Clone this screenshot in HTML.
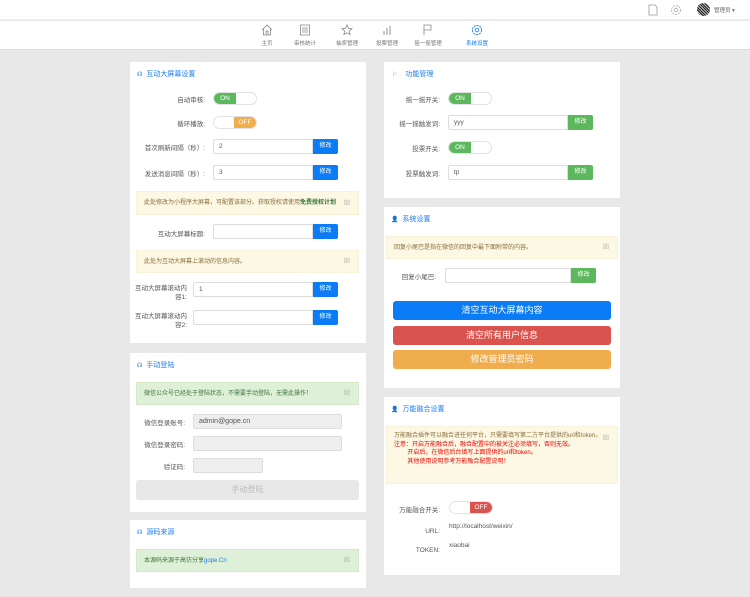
<!DOCTYPE html>
<html><head><meta charset="utf-8"><style>
*{box-sizing:border-box;margin:0;padding:0}
body{width:750px;height:597px;background:#e8e8e8;font-family:"Liberation Sans","Noto Sans CJK SC",sans-serif;font-size:7px;color:#555;position:relative;overflow:hidden}
.a{position:absolute}
.top{left:0;top:0;width:750px;height:20px;background:#fff;border-bottom:1px solid #eee}
.nav{left:0;top:21px;width:750px;height:29px;background:#fff;border-bottom:1px solid #ddd}
.ni{position:absolute;top:3px;width:40px;text-align:center;font-size:5.5px;color:#777}
.ni svg{display:block;margin:0 auto 3px}
.p{background:#fff;position:absolute}
.t{position:absolute;left:7px;top:7px;color:#1e7df0;font-size:7px}
.t i{font-style:normal;margin-right:4px;font-size:6px}
.lb{position:absolute;text-align:right;font-size:6.5px;color:#555}
.tg{position:absolute;width:44px;height:13px;border-radius:7px;border:1px solid #e2e2e2;background:#fff;overflow:hidden}
.tg span{position:absolute;top:0;height:100%;width:22px;color:#fff;font-size:6.5px;line-height:12px;text-align:center}
.in{position:absolute;height:15px;border:1px solid #ddd;border-radius:2px 0 0 2px;background:#fff;font-size:6.5px;line-height:13px;padding-left:5px;color:#555}
.bt{position:absolute;height:15px;width:25px;color:#fff;font-size:6px;line-height:15px;text-align:center;border-radius:0 2px 2px 0}
.b{background:#0a7cf6}.g{background:#5cb85c}
.al{position:absolute;background:#fcf8e3;color:#8a6d3b;font-size:6px;padding:0 7px;border:1px solid #f8f2d8}
.al.gr{background:#dff0d8;color:#3c763d;border-color:#d6e9c6}
.x{position:absolute;right:8px;color:#aaa;font-size:7px}
.bb{position:absolute;left:9px;width:218px;height:19px;border-radius:3px;color:#fff;text-align:center;font-size:9px;line-height:19px}
</style></head><body>
<div class="a top">
 <svg class="a" style="left:648px;top:4px" width="10" height="12" viewBox="0 0 10 12"><path d="M1 1h6l2 2v8H1z" fill="none" stroke="#999" stroke-width=".8"/></svg>
 <svg class="a" style="left:670px;top:4px" width="12" height="12" viewBox="0 0 12 12"><circle cx="6" cy="6" r="4.5" fill="none" stroke="#aaa" stroke-width=".8" stroke-dasharray="2 1"/><circle cx="6" cy="6" r="1.8" fill="none" stroke="#aaa" stroke-width=".8"/></svg>
 <div class="a" style="left:697px;top:3px;width:13px;height:13px;border-radius:50%;background:#555;background-image:repeating-linear-gradient(45deg,#222 0 1px,#bbb 1px 2px)"></div>
 <div class="a" style="left:714px;top:6px;font-size:5.5px;color:#666">管理员 ▾</div>
</div>
<div class="a nav">
 <div class="ni" style="left:247px"><svg width="12" height="12" viewBox="0 0 12 12"><path d="M1 6L6 1l5 5M2.5 5v6h7V5M5 11V7h2v4" fill="none" stroke="#888" stroke-width=".8"/></svg>主页</div>
 <div class="ni" style="left:285px"><svg width="12" height="12" viewBox="0 0 12 12"><path d="M1.5 1h9v10h-9zM3 4h6M3 6h6M3 8h6" fill="none" stroke="#888" stroke-width=".8"/></svg>审核统计</div>
 <div class="ni" style="left:327px"><svg width="12" height="12" viewBox="0 0 12 12"><path d="M6 1l1.5 3.3 3.5.4-2.6 2.4.7 3.5L6 8.8 2.9 10.6l.7-3.5L1 4.7l3.5-.4z" fill="none" stroke="#888" stroke-width=".8"/></svg>抽奖管理</div>
 <div class="ni" style="left:367px"><svg width="12" height="12" viewBox="0 0 12 12"><path d="M3 11V7M6 11V4M9 11V2" stroke="#888" stroke-width=".9"/></svg>投票管理</div>
 <div class="ni" style="left:408px"><svg width="12" height="12" viewBox="0 0 12 12"><path d="M2 11V1h7v5H2" fill="none" stroke="#888" stroke-width=".8"/></svg>摇一摇管理</div>
 <div class="ni" style="left:457px;color:#1e7df0"><svg width="12" height="12" viewBox="0 0 12 12"><circle cx="6" cy="6" r="4.6" fill="none" stroke="#1e7df0" stroke-width=".9" stroke-dasharray="2.2 .8"/><circle cx="6" cy="6" r="1.8" fill="none" stroke="#1e7df0" stroke-width=".8"/></svg>系统设置</div>
</div>

<div class="p" style="left:130px;top:62px;width:236px;height:281px">
 <div class="t"><i>☊</i>互动大屏幕设置</div>
 <div class="lb" style="left:0;width:75px;top:32px">自动审核:</div>
 <div class="tg" style="left:83px;top:30px"><span style="left:0;background:#5cb85c;border-radius:6px 0 0 6px">ON</span></div>
 <div class="lb" style="left:0;width:75px;top:56px">循环播放:</div>
 <div class="tg" style="left:83px;top:54px"><span style="right:0;background:#f0ad4e;border-radius:0 6px 6px 0">OFF</span></div>
 <div class="lb" style="left:0;width:75px;top:80px">首次刷新间隔（秒）:</div>
 <div class="in" style="left:83px;top:77px;width:100px">2</div><div class="bt b" style="left:183px;top:77px">修改</div>
 <div class="lb" style="left:0;width:75px;top:106px">发送消息间隔（秒）:</div>
 <div class="in" style="left:83px;top:103px;width:100px">3</div><div class="bt b" style="left:183px;top:103px">修改</div>
 <div class="al" style="left:6px;top:129px;width:223px;height:24px;line-height:23px">此处修改为小程序大屏幕，可配置该部分。获取授权请使用<b style="color:#3c763d">免费授权计划</b><span class="x">☒</span></div>
 <div class="lb" style="left:0;width:75px;top:166px">互动大屏幕标题:</div>
 <div class="in" style="left:83px;top:162px;width:100px"></div><div class="bt b" style="left:183px;top:162px">修改</div>
 <div class="al" style="left:6px;top:188px;width:223px;height:23px;line-height:22px">此处为互动大屏幕上滚动的信息内容。<span class="x">☒</span></div>
 <div class="lb" style="left:2px;width:55px;top:222px;line-height:9px">互动大屏幕滚动内容1:</div>
 <div class="in" style="left:63px;top:220px;width:120px">1</div><div class="bt b" style="left:183px;top:220px">修改</div>
 <div class="lb" style="left:2px;width:55px;top:250px;line-height:9px">互动大屏幕滚动内容2:</div>
 <div class="in" style="left:63px;top:248px;width:120px"></div><div class="bt b" style="left:183px;top:248px">修改</div>
</div>

<div class="p" style="left:130px;top:353px;width:236px;height:159px">
 <div class="t"><i>☊</i>手动登陆</div>
 <div class="al gr" style="left:6px;top:29px;width:223px;height:23px;line-height:22px">微信公众号已经处于登陆状态，不需要手动登陆，无需此操作！<span class="x">☒</span></div>
 <div class="lb" style="left:0;width:55px;top:64px">微信登录账号:</div>
 <div class="in" style="left:63px;top:61px;width:149px;background:#eee;border-radius:2px;font-size:7px">admin@gope.cn</div>
 <div class="lb" style="left:0;width:55px;top:86px">微信登录密码:</div>
 <div class="in" style="left:63px;top:83px;width:149px;background:#eee;border-radius:2px"></div>
 <div class="lb" style="left:0;width:55px;top:108px">验证码:</div>
 <div class="in" style="left:63px;top:105px;width:70px;background:#eee;border-radius:2px"></div>
 <div class="a" style="left:6px;top:127px;width:223px;height:20px;background:#e8e8e8;border-radius:3px;text-align:center;line-height:20px;color:#bbb;font-size:8px">手动登陆</div>
</div>

<div class="p" style="left:130px;top:520px;width:236px;height:68px">
 <div class="t"><i>☊</i>源码来源</div>
 <div class="al gr" style="left:6px;top:29px;width:223px;height:23px;line-height:22px">本源码来源于高仿分享<span style="color:#1e7df0">gope.Cn</span><span class="x">☒</span></div>
</div>

<div class="p" style="left:384px;top:62px;width:236px;height:136px">
 <div class="t" style="left:8px"><i style="color:#999;margin-right:8px">⚐</i>功能管理</div>
 <div class="lb" style="left:0;width:56px;top:32px">摇一摇开关:</div>
 <div class="tg" style="left:64px;top:30px"><span style="left:0;background:#5cb85c;border-radius:6px 0 0 6px">ON</span></div>
 <div class="lb" style="left:0;width:56px;top:56px">摇一摇触发词:</div>
 <div class="in" style="left:64px;top:53px;width:120px">yyy</div><div class="bt g" style="left:184px;top:53px">修改</div>
 <div class="lb" style="left:0;width:56px;top:81px">投票开关:</div>
 <div class="tg" style="left:64px;top:79px"><span style="left:0;background:#5cb85c;border-radius:6px 0 0 6px">ON</span></div>
 <div class="lb" style="left:0;width:56px;top:106px">投票触发词:</div>
 <div class="in" style="left:64px;top:103px;width:120px">tp</div><div class="bt g" style="left:184px;top:103px">修改</div>
</div>

<div class="p" style="left:384px;top:207px;width:236px;height:181px">
 <div class="t"><i>👤</i>系统设置</div>
 <div class="al" style="left:2px;top:29px;width:232px;height:23px;line-height:22px">回复小尾巴是指在微信的回复中最下面附带的内容。<span class="x">☒</span></div>
 <div class="lb" style="left:0;width:52px;top:64px">回复小尾巴:</div>
 <div class="in" style="left:61px;top:61px;width:126px"></div><div class="bt g" style="left:187px;top:61px">修改</div>
 <div class="bb" style="top:94px;background:#0a7cf6">清空互动大屏幕内容</div>
 <div class="bb" style="top:119px;background:#d9534f">清空所有用户信息</div>
 <div class="bb" style="top:143px;background:#f0ad4e">修改管理员密码</div>
</div>

<div class="p" style="left:384px;top:397px;width:236px;height:178px">
 <div class="t"><i>👤</i>万能融合设置</div>
 <div class="al" style="left:2px;top:29px;width:232px;height:58px;padding-top:5px;line-height:8.5px">万能融合插件可以融合进任何平台，只需要填写第二方平台提供的url和token。<br><span style="color:#e00">注意：开启万能融合后，融合配置中的被关注必须填写，否则无效。<br>&nbsp;&nbsp;&nbsp;&nbsp;&nbsp;&nbsp;&nbsp;&nbsp;开启后，在微信后台填写上面提供的url和token。<br>&nbsp;&nbsp;&nbsp;&nbsp;&nbsp;&nbsp;&nbsp;&nbsp;其他使用说明参考万能融合配置说明！</span><span class="x" style="top:8px">☒</span></div>
 <div class="lb" style="left:0;width:56px;top:107px">万能融合开关:</div>
 <div class="tg" style="left:65px;top:104px"><span style="right:0;background:#d9534f;border-radius:0 6px 6px 0">OFF</span></div>
 <div class="lb" style="left:0;width:56px;top:131px">URL:</div>
 <div class="a" style="left:65px;top:126px;font-size:6.5px">http://localhost/weixin/</div>
 <div class="lb" style="left:0;width:56px;top:150px">TOKEN:</div>
 <div class="a" style="left:65px;top:145px;font-size:6.5px">xiaobai</div>
</div>
</body></html>
